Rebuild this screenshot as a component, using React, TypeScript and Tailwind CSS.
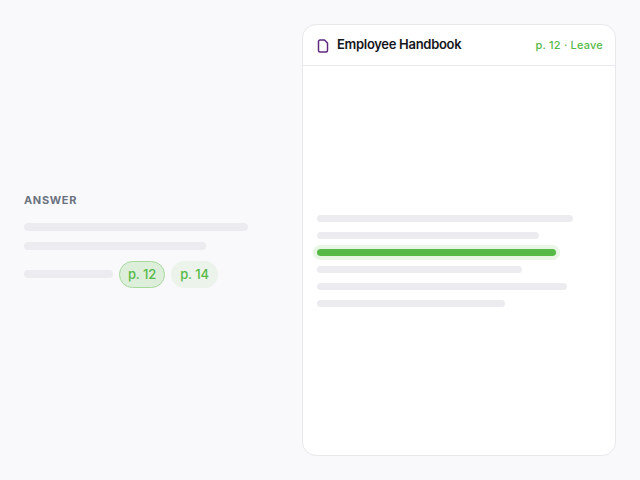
export default function App() {
  const lines = [
    { w: "w-[256px]" },
    { w: "w-[222px]" },
    { w: "w-[239px]", hl: true },
    { w: "w-[205px]" },
    { w: "w-[250px]" },
    { w: "w-[188px]" },
  ];
  return (
    <div className="flex h-[480px] w-[640px] items-stretch gap-[54px] overflow-hidden bg-[#f9f9fc] p-6 font-['Inter',sans-serif]">
      <div className="flex w-[224px] shrink-0 flex-col justify-center pt-[1px]">
        <div className="mb-[16px] text-[11px] font-bold leading-[14px] tracking-[0.66px] text-[#6b7280]">ANSWER</div>
        <div className="mb-[11px] h-2 w-[224px] rounded-full bg-[#ececf0]" />
        <div className="mb-[11px] h-2 w-[182px] rounded-full bg-[#ececf0]" />
        <div className="flex items-center gap-[6px]">
          <div className="mb-px h-2 w-[89px] rounded-full bg-[#ececf0]" />
          <div className="flex h-[27px] w-[46px] items-center justify-center rounded-full border border-[#a5d99a] bg-[#ddeeda] text-[13px] font-medium tracking-[-0.1px] text-[#55b947]">p. 12</div>
          <div className="flex h-[27px] w-[47px] items-center justify-center rounded-full bg-[#ebf3ea] text-[13px] font-medium tracking-[-0.1px] text-[#55b947]">p. 14</div>
        </div>
      </div>
      <div className="flex min-w-0 flex-1 flex-col overflow-hidden rounded-[14px] border border-[#e8e8ed] bg-white">
        <div className="box-content flex h-[40px] shrink-0 items-center border-b border-[#e8e8ed] pl-[14px] pr-3">
          <svg viewBox="0 0 12 14" fill="none" stroke="#5f2a7d" strokeWidth="1.5" strokeLinejoin="round" strokeLinecap="round" className="mr-[8px] mt-[2px] h-[14px] w-[12px] shrink-0">
            <path d="M7.5 1H3A1.5 1.5 0 0 0 1.5 2.5v9A1.5 1.5 0 0 0 3 13h6a1.5 1.5 0 0 0 1.5-1.5V4z" />
          </svg>
          <span className="text-[13px] font-semibold tracking-[-0.3px] text-[#16161d]">Employee Handbook</span>
          <span className="ml-auto text-[11px] font-medium tracking-[0.2px] text-[#55b947]">p. 12 · Leave</span>
        </div>
        <div className="flex flex-1 flex-col justify-center gap-[10px] px-[14px]">
          {lines.map((l, i) => (
            <div
              key={i}
              className={
                l.hl
                  ? `h-[7px] ${l.w} rounded-full bg-[#57b947] shadow-[0_0_0_4px_#e9f6e6]`
                  : `h-[7px] ${l.w} rounded-full bg-[#ececf0]`
              }
            />
          ))}
        </div>
      </div>
    </div>
  );
}
